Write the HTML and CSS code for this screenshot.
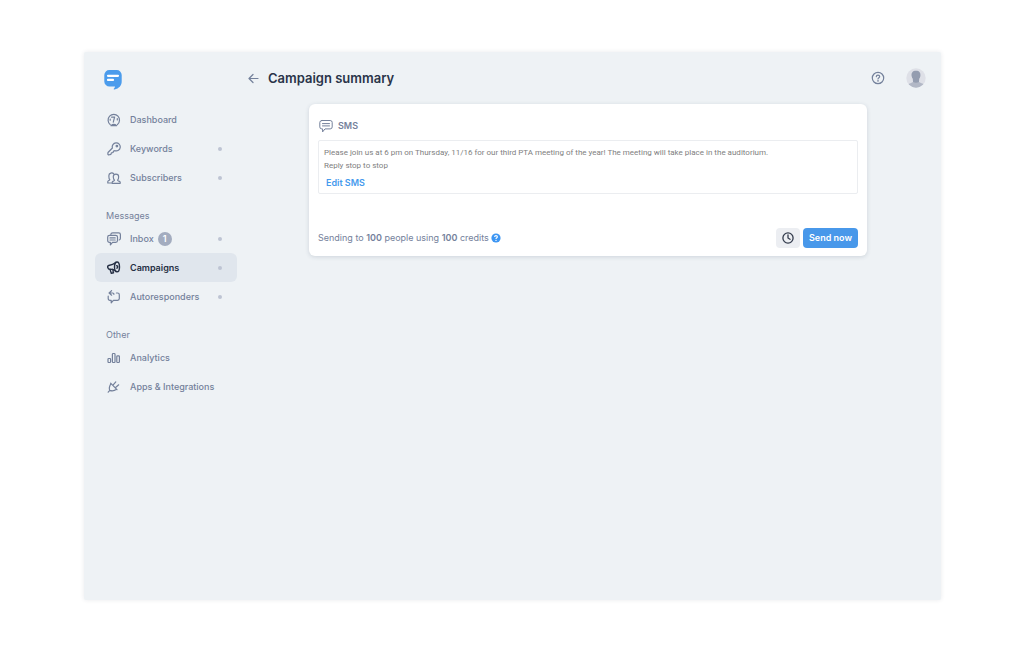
FILE: index.html
```html
<!DOCTYPE html>
<html lang="en">
<head>
<meta charset="utf-8">
<meta name="viewport" content="width=device-width, initial-scale=1">
<title>Campaign summary</title>
<link rel="stylesheet" href="styles.css">
</head>
<body>
<div class="app">
  <aside class="sidebar">
    <a class="logo" href="#" aria-label="Home">
      <svg width="18" height="21" viewBox="0 0 18 21"><path d="M5.500 1h7A5 5 0 0 1 17.700 6v6.500C17.700 16.500 15 19.500 10.500 20.500c-.8.100-1-.5-.5-1 .7-.6 1-1.100 1-1.900H5.500A5.200 5.200 0 0 1 .3 12.400V6A5 5 0 0 1 5.500 1z" fill="#4b9cec"/><path d="M4 6.800h10M4 10.900h5" stroke="#fff" stroke-width="2.200" stroke-linecap="round"/></svg>
    </a>
    <nav class="nav">
      <a class="item" href="#">
        <svg class="icon" viewBox="0 0 14 14"><path d="M3.200 11.500A5.700 5.700 0 1 1 10.400 11.500"/><path d="M4 12.700q2.800-2.600 5.600 0z" fill="currentColor"/><path d="M6.300 9.200 7.600 4.200M4.600 4.200h3M3.200 6.200v1M10.300 5.500v1.500"/></svg>
        <span>Dashboard</span>
      </a>
      <a class="item" href="#">
        <svg class="icon" viewBox="0 0 14 14"><path d="M5.400 6A4 4 0 1 1 8 8.700L6.600 9 6 10.500l-1.500.300-.6 1.500-2.400.7L.8 12.200 1 10.500z"/><circle cx="9.900" cy="4.100" r=".8"/></svg>
        <span>Keywords</span><i class="dot"></i>
      </a>
      <a class="item" href="#">
        <svg class="icon" viewBox="0 0 14 14"><path d="M4.500 12H.8v-1.500c0-1 1.900-1 2-1.900C1.500 7.500 2 6 1.900 4.500 1.800 1.800 5.500 1.200 6.700 2.900"/><path d="M5.200 12.300v-1.100c0-1 2.200-1.100 2.300-2C6.200 8 6.400 7 6.300 5.600 6.300 2.300 11.600 2.300 11.600 5.600c0 1.400.2 2.400-1 3.600.1.900 2.600 1 2.600 2v1.100z"/></svg>
        <span>Subscribers</span><i class="dot"></i>
      </a>
      <h2 class="group">Messages</h2>
      <a class="item" href="#">
        <svg class="icon" viewBox="0 0 14 14"><path d="M3.800 2.400q.2-1.600 1.900-1.600h6q1.700 0 1.700 1.800v3.700q0 1.500-1.200 1.700"/><path d="M2.500 3.300h6.200q1.800 0 1.800 1.800v3.500q0 1.800-1.800 1.800H5.500L3.400 12.900v-2.500h-.9Q.7 10.400.7 8.600V5.100Q.7 3.300 2.500 3.300zM3 5.900h5.200M3 8h5.200"/></svg>
        <span>Inbox</span><span class="count">1</span><i class="dot"></i>
      </a>
      <a class="item active" href="#" aria-current="page">
        <svg class="icon" viewBox="0 0 14 14"><path d="M8.800 1.500Q6 3.600 1.700 4.500.2 5 .9 6.800q.6 1.700 2.200 1.300Q6.500 8 9.200 10.300M3 8.300l1.300 4.100 2.200-.6-.9-3.500"/><ellipse cx="10" cy="5.900" rx="2.500" ry="4.900"/><path d="M9.600 4.700q1.200 0 1.100 1.200T9.700 7.100"/></svg>
        <span>Campaigns</span><i class="dot"></i>
      </a>
      <a class="item" href="#">
        <svg class="icon" viewBox="0 0 14 14"><path d="M4.600.600 2.100 3l2.500 2.200M2.300 3h3.300q1.300 0 1.300 1.300M9.400 3H10.600q1.700 0 1.700 1.700v3.900q0 1.700-1.700 1.700H6.400L4.200 12.800V10.300H3Q1.200 10.300 1.200 8.500V6.200"/></svg>
        <span>Autoresponders</span><i class="dot"></i>
      </a>
      <h2 class="group">Other</h2>
      <a class="item" href="#">
        <svg class="icon" viewBox="0 0 14 14"><rect x="1" y="7.500" width="2.600" height="4" rx=".8"/><rect x="5.400" y="2.500" width="2.600" height="9" rx=".8"/><rect x="9.800" y="4.800" width="2.600" height="6.700" rx=".8"/></svg>
        <span>Analytics</span>
      </a>
      <a class="item" href="#">
        <svg class="icon" viewBox="0 0 14 14"><path d="M3.600 3.200 10 9.700M4 3.600Q1.400 7.600 2.800 10.400 6.200 11.700 9.600 9.300M2.800 10.400 1.200 12.200M6 5.200 8.800 1.900M8.300 7.700l3.400-2.900"/></svg>
        <span>Apps &amp; Integrations</span>
      </a>
    </nav>
  </aside>
  <main class="main">
    <header class="header">
      <a class="back" href="#" aria-label="Back"><svg width="11" height="11" viewBox="0 0 11 11"><path d="M10 5.500H1M5 1.500l-4 4 4 4"/></svg></a>
      <h1 class="title">Campaign summary</h1>
      <button class="plain" type="button" aria-label="Help">
        <svg width="14" height="14" viewBox="0 0 14 14"><g fill="none" stroke="#74819b" stroke-width="1.200" stroke-linecap="round"><circle cx="7" cy="7" r="5.700"/><path d="M5.300 5.600Q5.400 4.100 7 4.100T8.700 5.500Q8.700 6.400 7.700 6.900 7 7.300 7 8"/></g><circle cx="7" cy="9.900" r=".8" fill="#74819b"/></svg>
      </button>
      <button class="plain" type="button" aria-label="Account">
        <svg width="20" height="20" viewBox="0 0 20 20"><defs><clipPath id="face"><circle cx="10" cy="10" r="9.700"/></clipPath></defs><circle cx="10" cy="10" r="9.700" fill="#dee0e7"/><g clip-path="url(#face)"><path d="M1 20q0-4.200 3.500-4.800L7 14v-3h6v3l2.500 1.200q3.500.6 3.500 4.800z" fill="#b2b8c6"/><path d="M10 2.700c3.400 0 4.800 2 4.400 5.300-.2 1.300-.7 2.200-1.200 2.800L13 14q-3 1.500-6 0l-.2-3.200C6.300 10.200 5.800 9.300 5.600 8 5.200 4.700 6.600 2.700 10 2.700z" fill="#949db0"/></g></svg>
      </button>
    </header>
    <section class="card">
      <h2 class="kind">
        <svg width="14" height="14" viewBox="0 0 14 14"><path d="M2.800 1.500h8.400q2 0 2 2v4.400q0 2-2 2H6L3.600 12.900v-3h-.8q-2 0-2-2V3.500q0-2 2-2zM3.500 4.600h7M3.500 6.900h7"/></svg>
        SMS
      </h2>
      <div class="message">
        <p class="text">Please join us at 6 pm on Thursday, 11/16 for our third PTA meeting of the year! The meeting will take place in the auditorium.<br>Reply stop to stop</p>
        <a class="edit" href="#">Edit SMS</a>
      </div>
      <footer class="footer">
        <p class="cost">Sending to <b>100</b> people using <b>100</b> credits</p>
        <button class="plain" type="button" aria-label="About credits"><svg width="10" height="10" viewBox="0 0 10 10"><circle cx="5" cy="5" r="4.600" fill="#3d96f3"/><path d="M3.600 3.900Q3.600 2.600 5 2.600t1.400 1.200Q6.400 4.500 5.500 5 5 5.300 5 5.900" fill="none" stroke="#fff" stroke-width="1.100"/><circle cx="5" cy="7.400" r=".7" fill="#fff"/></svg></button>
        <div class="actions">
          <button class="btn schedule" type="button" aria-label="Schedule"><svg width="12" height="12" viewBox="0 0 12 12"><circle cx="6" cy="6" r="5.100"/><path d="M6 2.800V6l2 1.300"/></svg></button>
          <button class="btn send" type="button">Send now</button>
        </div>
      </footer>
    </section>
  </main>
</div>
</body>
</html>
```
FILE: styles.css
```css
* { box-sizing: border-box; }

body {
  display: flex;
  min-height: 100vh;
  margin: 0;
  padding: 52px 83px 53px 84px;
  background: #fff;
  color: #74819b;
  font: 9px/14px Inter, "Liberation Sans", sans-serif;
}

h1, h2, p { margin: 0; }
a { color: inherit; text-decoration: none; }
b { font-weight: 600; }
svg { display: block; flex: none; }
button { font: inherit; border: 0; cursor: pointer; }

.app {
  display: flex;
  flex: 1;
  border-radius: 2px;
  background: #eef2f5;
  box-shadow: 0 0 4px rgba(30, 40, 70, 0.1);
}

.sidebar {
  flex: none;
  width: 153px;
  padding: 17px 0 0 11px;
}

.logo { display: block; margin: 0 0 15px 9px; }

.nav { display: flex; flex-direction: column; }

.item {
  display: flex;
  align-items: center;
  height: 29px;
  padding: 0 15px 0 12px;
  border-radius: 6px;
  font-weight: 500;
}

.item.active { background: #e0e6ed; color: #252f44; font-weight: 600; }

.icon {
  width: 14px;
  height: 14px;
  margin-right: 9px;
  fill: none;
  stroke: currentColor;
  stroke-width: 1.2;
  stroke-linecap: round;
  stroke-linejoin: round;
}

.active .icon { stroke-width: 1.4; }

.dot {
  width: 4px;
  height: 4px;
  margin-left: auto;
  border-radius: 50%;
  background: #bdc4d3;
}

.count {
  width: 14px;
  height: 14px;
  margin-left: 4px;
  border-radius: 50%;
  background: #a3acbf;
  color: #fff;
  font-weight: 600;
  text-align: center;
}

.group {
  margin-top: 16px;
  padding-left: 11px;
  font-size: 9px;
  line-height: 16px;
  font-weight: 400;
}

.main { flex: 1; min-width: 0; padding-right: 2px; }

.header {
  display: flex;
  align-items: center;
  height: 52px;
  padding: 0 13px 0 11px;
}

.back svg, .kind svg, .schedule svg {
  fill: none;
  stroke: currentColor;
  stroke-linecap: round;
  stroke-linejoin: round;
}

.back svg { stroke-width: 1.2; }

.title {
  flex: 1;
  margin-left: 9px;
  color: #2a3449;
  font-size: 13px;
  line-height: 20px;
  font-weight: 600;
}

.plain { padding: 0; background: none; }
.header .plain + .plain { margin-left: 21px; }

.card {
  width: calc(100% - 32px);
  max-width: 558px;
  margin: 0 auto;
  padding: 14px 9px 8px;
  border-radius: 6px;
  background: #fff;
  box-shadow: 0 1px 4px rgba(40, 55, 90, 0.16);
}

.kind {
  display: flex;
  align-items: center;
  gap: 5px;
  padding-left: 1px;
  font-size: 9px;
  line-height: 16px;
  font-weight: 600;
}

.message {
  margin-top: 6px;
  padding: 5px 5px 0;
  border: 1px solid #ebedf0;
  border-radius: 2px;
}

.text { color: #808080; font-family: Roboto, "Liberation Sans", sans-serif; font-size: 8px; line-height: 13px; }

.edit {
  display: inline-block;
  padding: 5px 2px 4px;
  color: #459aed;
  line-height: 12px;
  font-weight: 600;
}

.footer { display: flex; align-items: center; margin-top: 34px; }
.footer .plain { margin-left: 2px; }
.actions { display: flex; gap: 3px; margin-left: auto; }

.btn {
  display: flex;
  align-items: center;
  justify-content: center;
  height: 20px;
  padding: 0 6px;
  border-radius: 4px;
}

.schedule { background: #eceef2; color: #333b4c; }
.schedule svg { stroke-width: 1.3; }
.send { background: #4898ea; color: #fff; font-weight: 600; }
```
